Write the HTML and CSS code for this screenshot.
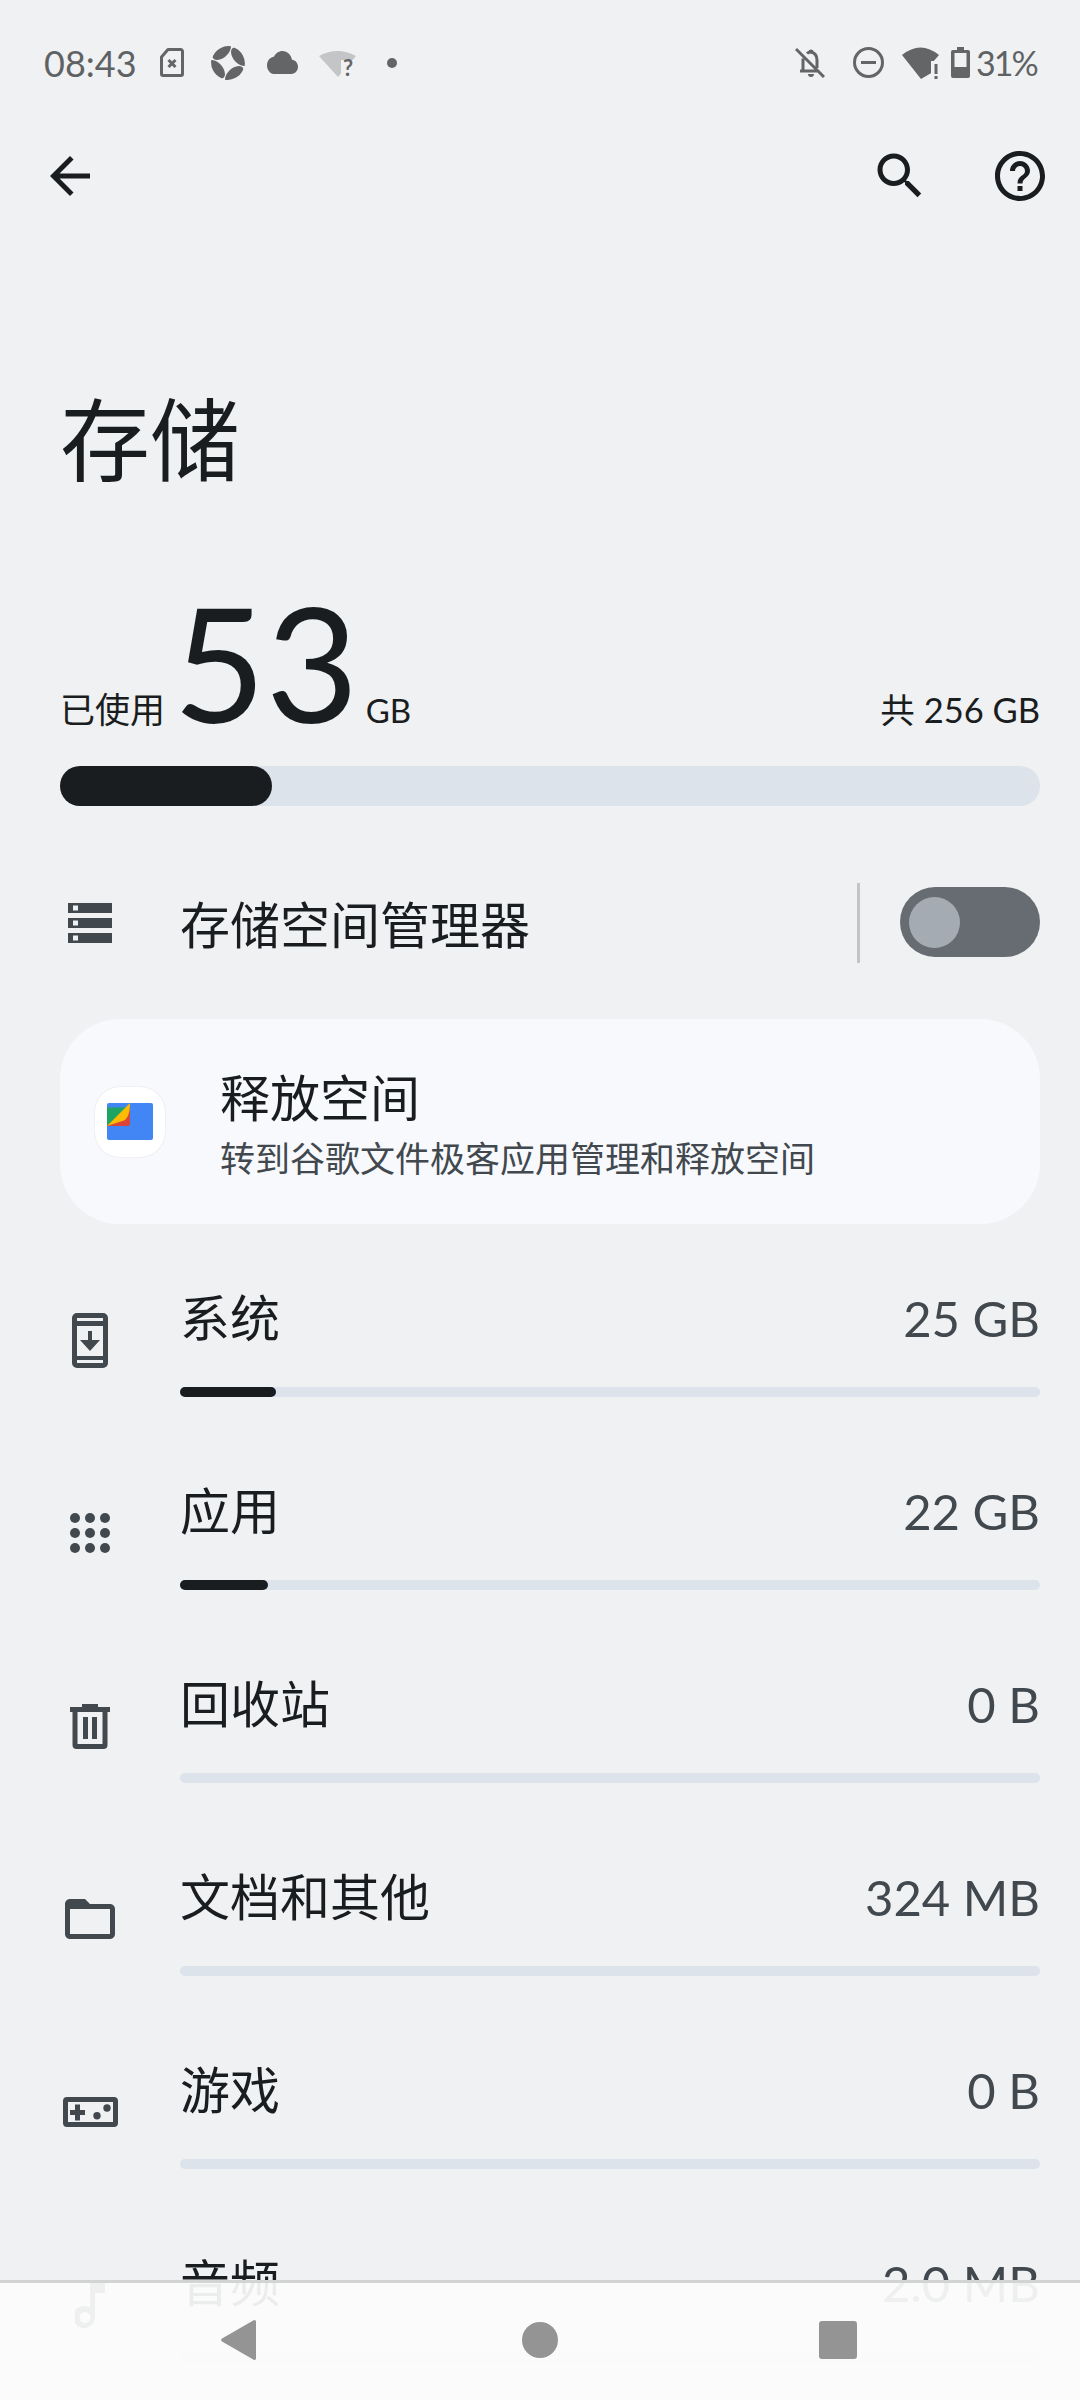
FILE: index.html
```html
<!DOCTYPE html>
<html lang="zh-CN">
<head>
<meta charset="utf-8">
<title>存储</title>
<link rel="stylesheet" href="styles.css">
</head>
<body>
<div class="screen">
  <header class="status">
    <div class="status-left">
      <span class="time">08:43</span>
      <svg class="si sim" viewBox="0 0 24 29"><path class="sl" d="M8 1.500h13a2 2 0 0 1 1.500 1.500v23a1.500 1.500 0 0 1-1.500 1.500H3A1.500 1.500 0 0 1 1.500 26V9z"/><path class="sl2" d="M8.500 12l7 7M15.500 12l-7 7"/></svg>
      <svg class="si swirl" viewBox="-18 -18 36 36"><g class="sf"><path d="M-15 -7A17 17 0 0 1 3-16.700C3-11-3-3.500-11-3-14-3-16-5-15-7z"/><path transform="rotate(90)" d="M-15 -7A17 17 0 0 1 3-16.700C3-11-3-3.500-11-3-14-3-16-5-15-7z"/><path transform="rotate(180)" d="M-15 -7A17 17 0 0 1 3-16.700C3-11-3-3.500-11-3-14-3-16-5-15-7z"/><path transform="rotate(270)" d="M-15 -7A17 17 0 0 1 3-16.700C3-11-3-3.500-11-3-14-3-16-5-15-7z"/></g></svg>
      <svg class="si cloud" viewBox="0 4 24 16" preserveAspectRatio="none"><path class="sf" d="M19.350 10.040C18.670 6.590 15.640 4 12 4 9.110 4 6.600 5.640 5.350 8.040 2.340 8.360 0 10.910 0 14c0 3.310 2.690 6 6 6h13c2.760 0 5-2.240 5-5 0-2.640-2.050-4.780-4.650-4.960z"/></svg>
      <svg class="si wifi1" viewBox="0 0 37 35"><path class="wl" d="M0 7Q18.500-3 37 7L19 28z"/><path class="cutfill" d="M22 11h15v18H22z"/><text class="q" x="24" y="27">?</text></svg>
      <span class="dot"></span>
    </div>
    <div class="status-right">
      <svg class="si bell" viewBox="0 0 30 31"><path class="sl3" d="M1 2l28 28M5 24h18M8 11.500V24M22 21V13c0-4-2-7-6-8-2 0-3 .5-4 1.500"/><path class="sf" d="M13.500 5a2.500 2.500 0 0 1 5 0zM13 27h6a3 3 0 0 1-6 0z"/></svg>
      <svg class="si dnd" viewBox="0 0 31 31"><circle class="sl3" cx="15.500" cy="15.500" r="14"/><path class="sl3" d="M8 15.500h15"/></svg>
      <svg class="si wifi2" viewBox="0 0 37 32"><path class="sf" d="M0 8Q18.500-7 37 8L31 15V25L19 32z"/><path class="cutfill" d="M29 14h8v18h-8z"/><path class="sf" d="M32.500 17h3v10h-3zM32.500 29h3v3h-3z"/></svg>
      <svg class="si batt" viewBox="0 0 19 31"><path class="sf" d="M6 0h7v3h4a2 2 0 0 1 2 2v24a2 2 0 0 1-2 2H2a2 2 0 0 1-2-2V5a2 2 0 0 1 2-2h4z"/><path class="cutfill" d="M3.500 6h12v14h-12z"/></svg>
      <span class="pct">31%</span>
    </div>
  </header>

  <nav class="toolbar">
    <svg class="ti" viewBox="0 0 24 24"><path d="M20 11H7.830l5.590-5.590L12 4l-8 8 8 8 1.410-1.410L7.830 13H20v-2z"/></svg>
    <span class="spacer"></span>
    <svg class="ti" viewBox="0 0 24 24"><path d="M15.500 14h-.79l-.28-.27C15.410 12.590 16 11.110 16 9.500 16 5.910 13.090 3 9.500 3S3 5.910 3 9.500 5.910 16 9.500 16c1.610 0 3.090-.59 4.230-1.570l.27.28v.79l5 4.990L20.490 19l-4.990-5zm-6 0C7.010 14 5 11.990 5 9.500S7.010 5 9.500 5 14 7.010 14 9.500 11.990 14 9.500 14z"/></svg>
    <svg class="ti" viewBox="0 0 24 24"><path d="M11 18h2v-2h-2v2zm1-16C6.480 2 2 6.480 2 12s4.480 10 10 10 10-4.480 10-10S17.520 2 12 2zm0 18c-4.410 0-8-3.590-8-8s3.590-8 8-8 8 3.590 8 8-3.590 8-8 8zm0-14c-2.210 0-4 1.790-4 4h2c0-1.100.9-2 2-2s2 .9 2 2c0 2-3 1.750-3 5h2c0-2.250 3-2.500 3-5 0-2.210-1.790-4-4-4z"/></svg>
  </nav>

  <h1 class="title">存储</h1>

  <section class="usage">
    <div class="usage-text">
      <span class="used-label">已使用</span>
      <span class="used-num">53</span>
      <span class="used-unit">GB</span>
      <span class="spacer"></span>
      <span class="total">共 256 GB</span>
    </div>
    <div class="usage-bar"><div class="usage-fill"></div></div>
  </section>

  <section class="manager">
    <svg class="manager-icon" viewBox="0 0 44 40"><path class="ic" fill-rule="evenodd" d="M0 0h44v10H0zM5 2.500v5h5v-5zM0 15h44v10H0zM5 17.500v5h5v-5zM0 30h44v10H0zM5 32.500v5h5v-5z"/></svg>
    <span class="manager-label">存储空间管理器</span>
    <span class="divider"></span>
    <span class="toggle"><span class="knob"></span></span>
  </section>

  <section class="card">
    <span class="app-icon">
      <svg viewBox="0 0 46 37" class="files"><rect x="0" y="0" width="46" height="37" rx="2" fill="#4285f4"/><path d="M0 4.500h19l4-4.500v22L0 23z" fill="#1fa463"/><path d="M23 1V21a2 2 0 0 1-2 2L0 23z" fill="#db4437"/><path d="M23 0c0 9-2 15-6 17.500L0 23z" fill="#fbbc04"/></svg>
    </span>
    <div class="card-text">
      <div class="card-title">释放空间</div>
      <div class="card-sub">转到谷歌文件极客应用管理和释放空间</div>
    </div>
  </section>

  <ul class="list">
    <li class="row">
      <span class="row-icon"><svg class="phone" viewBox="0 0 36 55"><path class="ic" fill-rule="evenodd" d="M5 0h26a5 5 0 0 1 5 5v45a5 5 0 0 1-5 5H5a5 5 0 0 1-5-5V5a5 5 0 0 1 5-5zM5 5v3h26V5zM5 13v30h26V13zM5 47v3h26v-3zM16 18h4v9h8L18 38 8 27h8z"/></svg></span>
      <div class="row-main">
        <div class="row-line"><span class="row-label">系统</span><span class="row-value">25 GB</span></div>
        <div class="row-bar"><div class="row-fill fill-sys"></div></div>
      </div>
    </li>
    <li class="row">
      <span class="row-icon"><svg class="dots" viewBox="0 0 40 40"><g class="ic"><circle cx="5" cy="5" r="5"/><circle cx="20" cy="5" r="5"/><circle cx="35" cy="5" r="5"/><circle cx="5" cy="20" r="5"/><circle cx="20" cy="20" r="5"/><circle cx="35" cy="20" r="5"/><circle cx="5" cy="35" r="5"/><circle cx="20" cy="35" r="5"/><circle cx="35" cy="35" r="5"/></g></svg></span>
      <div class="row-main">
        <div class="row-line"><span class="row-label">应用</span><span class="row-value">22 GB</span></div>
        <div class="row-bar"><div class="row-fill fill-app"></div></div>
      </div>
    </li>
    <li class="row">
      <span class="row-icon"><svg class="trash" viewBox="0 0 40 45"><path class="ic" fill-rule="evenodd" d="M12 0h16v3h12v5h-2.500v33a4 4 0 0 1-4 4h-27a4 4 0 0 1-4-4V8H0V3h12zM7.500 8v32h25V8zM13 13h5v22h-5zM22 13h5v22h-5z"/></svg></span>
      <div class="row-main">
        <div class="row-line"><span class="row-label">回收站</span><span class="row-value">0 B</span></div>
        <div class="row-bar"></div>
      </div>
    </li>
    <li class="row">
      <span class="row-icon"><svg class="ti-row" viewBox="0 0 24 24"><path class="ic" d="M20 6h-8l-2-2H4c-1.100 0-1.990.9-1.990 2L2 18c0 1.100.9 2 2 2h16c1.100 0 2-.9 2-2V8c0-1.100-.9-2-2-2zm0 12H4V8h16v10z"/></svg></span>
      <div class="row-main">
        <div class="row-line"><span class="row-label">文档和其他</span><span class="row-value">324 MB</span></div>
        <div class="row-bar"></div>
      </div>
    </li>
    <li class="row">
      <span class="row-icon"><svg class="pad" viewBox="0 0 55 30"><path class="ic" fill-rule="evenodd" d="M4 0h47a4 4 0 0 1 4 4v22a4 4 0 0 1-4 4H4a4 4 0 0 1-4-4V4a4 4 0 0 1 4-4zM5 5v20h45V5zM12 7.500h5V13h5v5h-5v5.500h-5V18H7v-5h5z"/><circle class="ic" cx="34" cy="18.700" r="3.700"/><circle class="ic" cx="44" cy="11" r="3.700"/></svg></span>
      <div class="row-main">
        <div class="row-line"><span class="row-label">游戏</span><span class="row-value">0 B</span></div>
        <div class="row-bar"></div>
      </div>
    </li>
    <li class="row">
      <span class="row-icon"><svg class="note" viewBox="0 0 30 45"><path class="ic" fill-rule="evenodd" d="M15 0h15v10H20v24a11 11 0 1 1-5-9.200zM10 29a5.500 5.500 0 1 0 0 11 5.500 5.500 0 0 0 0-11z"/></svg></span>
      <div class="row-main">
        <div class="row-line"><span class="row-label">音频</span><span class="row-value">2.0 MB</span></div>
        <div class="row-bar"></div>
      </div>
    </li>
  </ul>

  <footer class="navbar">
    <svg class="nav-back" viewBox="0 0 35 40"><path d="M33.500 0a1.500 1.500 0 0 1 1.500 1.500v37a1.500 1.500 0 0 1-2.300 1.200L1 21.500a2 2 0 0 1 0-3L32.700.3z"/></svg>
    <span class="nav-home"></span>
    <span class="nav-recent"></span>
  </footer>
</div>
</body>
</html>
```

FILE: styles.css
```css
* { box-sizing: border-box; }
html, body { margin: 0; padding: 0; }
body { font-family: Lato, "Noto Sans CJK SC", sans-serif; }

.screen {
  position: relative;
  width: 1080px;
  height: 2400px;
  overflow: hidden;
  background: #f0f1f3;
  color: #1a1d20;
}
.spacer { flex: 1; }

/* status bar */
.status {
  height: 125px;
  padding: 0 44px;
  display: flex;
  align-items: center;
  justify-content: space-between;
  color: #5f6264;
}
.status-left, .status-right { display: flex; align-items: center; }
.time { font-size: 36px; line-height: 40px; width: 92px; }
.pct { font-size: 34px; line-height: 40px; margin-left: 6px; width: 60px; letter-spacing: -2px; }
.si { display: block; flex: none; }
.sf { fill: #636567; }
.sl { fill: none; stroke: #636567; stroke-width: 3; stroke-linejoin: round; }
.sl2 { fill: none; stroke: #636567; stroke-width: 3; }
.sl3 { fill: none; stroke: #636567; stroke-width: 3; }
.cutfill { fill: #f0f1f3; }
.wl { fill: #c4c5c7; }
.q { font: bold 22px Lato, sans-serif; fill: #636567; }
.sim { width: 24px; height: 29px; margin-left: 24px; }
.swirl { width: 36px; height: 36px; margin-left: 26px; }
.cloud { width: 31px; height: 23px; margin-left: 21px; }
.wifi1 { width: 37px; height: 35px; margin: 8px 0 0 21px; }
.dot { width: 10px; height: 10px; border-radius: 50%; background: #636567; margin-left: 31px; }
.bell { width: 30px; height: 31px; }
.dnd { width: 31px; height: 31px; margin-left: 28px; }
.wifi2 { width: 37px; height: 32px; margin-left: 18px; }
.batt { width: 19px; height: 31px; margin-left: 12px; }

/* toolbar */
.toolbar {
  display: flex;
  align-items: center;
  gap: 60px;
  height: 60px;
  margin-top: 21px;
  padding: 0 30px 0 40px;
}
.ti { width: 60px; height: 60px; fill: #1a1d20; flex: none; }
.toolbar .spacer { margin-right: -60px; }

/* title */
.title {
  margin: 179px 0 0;
  padding-left: 60px;
  font-family: "Noto Sans CJK SC", sans-serif;
  font-size: 90px;
  font-weight: 400;
  line-height: 100px;
}

/* usage */
.usage { padding: 0 40px 0 60px; }
.usage-text {
  display: flex;
  align-items: baseline;
  height: 180px;
  margin-top: 101px;
}
.used-label { font-size: 35px; line-height: 40px; }
.used-num { font-size: 160px; line-height: 150px; margin-left: 8px; }
.used-unit { font-size: 33px; line-height: 40px; margin-left: 7px; }
.total { font-size: 34.500px; line-height: 40px; }
.usage-bar { height: 40px; border-radius: 20px; background: #dce3eb; }
.usage-fill { width: 212px; height: 40px; border-radius: 20px; background: #1a1d20; }

/* manager */
.manager {
  display: flex;
  align-items: center;
  height: 80px;
  margin-top: 77px;
  padding: 0 40px 0 68px;
}
.manager-icon { width: 44px; height: 40px; margin-right: 68px; }
.ic { fill: #41484e; }
.manager-label { flex: 1; font-size: 50px; line-height: 60px; position: relative; top: 2px; }
.divider { width: 3px; height: 80px; background: #c4c4c4; margin-right: 40px; }
.toggle {
  display: flex;
  align-items: center;
  width: 140px;
  height: 70px;
  margin-bottom: 2px;
  padding-left: 9px;
  border-radius: 35px;
  background: #666c71;
}
.knob { width: 51px; height: 51px; border-radius: 50%; background: #a4abb2; }

/* card */
.card {
  display: flex;
  align-items: center;
  height: 205px;
  margin: 56px 40px 0 60px;
  padding-left: 35px;
  border-radius: 60px;
  background: #f8f9fd;
}
.app-icon {
  display: flex;
  align-items: center;
  justify-content: center;
  width: 70px;
  height: 70px;
  border-radius: 25px;
  background: #fff;
  box-shadow: 0 0 2px rgba(0, 0, 0, .12);
  margin-right: 55px;
}
.files { width: 46px; height: 37px; }
.card-text { margin-top: 6px; }
.card-title { font-size: 50px; line-height: 60px; }
.card-sub { font-size: 35px; line-height: 46px; color: #41484e; margin-top: 7px; }

/* rows */
.list { list-style: none; margin: 36px 0 0; padding: 0 40px 0 0; }
.row { display: flex; height: 193px; }
.row-icon {
  width: 180px;
  height: 160px;
  display: flex;
  align-items: center;
  justify-content: center;
  flex: none;
}
.row-main { flex: 1; padding-top: 30px; }
.row-line {
  display: flex;
  justify-content: space-between;
  align-items: center;
  height: 56px;
  margin-bottom: 41px;
}
.row-label { font-size: 50px; line-height: 56px; }
.row-value { font-size: 49px; line-height: 56px; color: #41484e; }
.row-bar { height: 10px; border-radius: 5px; background: #dce3eb; }
.row-fill { height: 10px; border-radius: 5px; background: #1a1d20; }
.fill-sys { width: 96px; }
.fill-app { width: 88px; }

.phone { width: 36px; height: 55px; }
.dots { width: 40px; height: 40px; }
.trash { width: 40px; height: 45px; }
.ti-row { width: 60px; height: 60px; }
.pad { width: 55px; height: 30px; }
.note { width: 30px; height: 45px; }

/* navigation bar (floats over the list) */
.navbar {
  position: absolute;
  left: 0;
  right: 0;
  bottom: 0;
  height: 120px;
  border-top: 3px solid #d2d3d5;
  background: rgba(252, 252, 252, .93);
}
.nav-back { position: absolute; left: 221px; top: 37px; width: 35px; height: 40px; fill: #949494; }
.nav-home { position: absolute; left: 522px; top: 39px; width: 36px; height: 36px; border-radius: 50%; background: #949494; }
.nav-recent { position: absolute; left: 819px; top: 38px; width: 38px; height: 38px; border-radius: 3px; background: #949494; }
```
